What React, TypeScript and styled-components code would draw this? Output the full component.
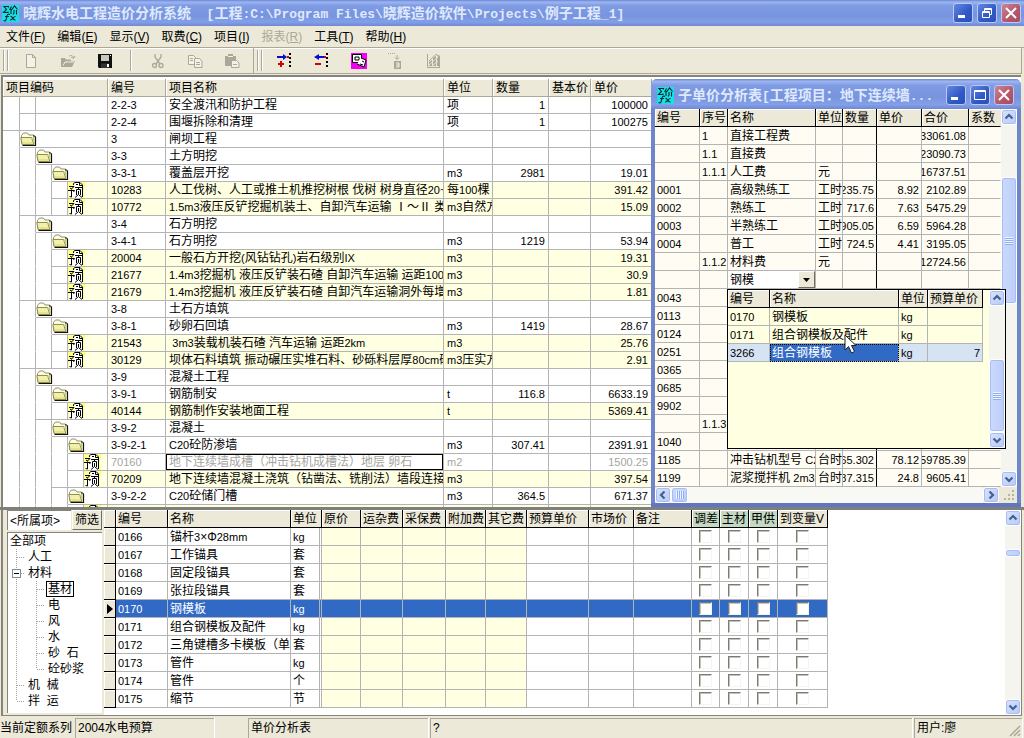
import React from 'react';
import styled, { createGlobalStyle, css } from 'styled-components';

const face = '#ece9d8';
const line = '#b4b4b4';
const pale = '#ffffe1';
const cream = '#fffdf3';
const select = '#316ac5';

const GlobalStyle = createGlobalStyle`
  * { box-sizing: border-box; }
  html, body { margin: 0; height: 100%; }
  body {
    background: ${face};
    color: #000;
    font: 12px/14px "Liberation Sans", "Noto Sans CJK SC", sans-serif;
    overflow: hidden;
  }
  button, input { font: inherit; color: inherit; margin: 0; padding: 0; border: 0; border-radius: 0; }
`;

/* ---------- frame ---------- */

const Frame = styled.div`
  display: flex;
  flex-direction: column;
  height: 100vh;
  min-width: 900px;
`;

const TitleBar = styled.header<{ $tall?: boolean }>`
  display: flex;
  align-items: center;
  gap: 4px;
  height: ${p => (p.$tall ? 30 : 26)}px;
  padding: 0 3px 0 2px;
  overflow: hidden;
  background: linear-gradient(#6c87d8 0, #9db5f0 8%, #7e9be4 22%, #7894de 60%, #839fe8 85%, #7088d2 100%);
  ${p => p.$tall && css`
    padding: 2px 7px 0 6px;
    border-radius: 6px 6px 0 0;
  `}
`;

const Caption = styled.h1`
  flex: 1;
  min-width: 0;
  margin: 0;
  overflow: hidden;
  white-space: pre;
  color: #dfe9fd;
  font: bold 14px/20px "Noto Sans CJK SC", sans-serif;
`;

const Mono = styled.span`
  font-family: "Liberation Mono", monospace;
  font-size: 13px;
`;

const CaptionButtons = styled.div`
  display: flex;
  gap: 4px;
`;

const CaptionButton = styled.button<{ $close?: boolean }>`
  display: flex;
  align-items: center;
  justify-content: center;
  width: 20px;
  height: 20px;
  border: 1px solid #b9c9f4;
  border-radius: 3px;
  background: ${p => p.$close
    ? 'linear-gradient(135deg, #c98593, #b5566a 60%, #a84c62)'
    : 'linear-gradient(135deg, #6487e4, #3058c4 60%, #2c50bc)'};
`;

const MenuBar = styled.nav`
  display: flex;
  gap: 12px;
  height: 21px;
  padding: 3px 6px 0;
`;

const MenuItem = styled.button`
  height: 16px;
  background: none;
  line-height: 16px;
  white-space: nowrap;
  &:disabled { color: #aca899; }
`;

const ToolBars = styled.div`
  display: flex;
  height: 27px;
  padding-right: 2px;
  border-top: 1px solid #aca899;
`;

const ToolBar = styled.div<{ $grow?: boolean }>`
  display: flex;
  align-items: center;
  flex: ${p => (p.$grow ? 1 : 'none')};
  padding-left: 3px;
  border: solid #aca899;
  border-width: 0 1px 1px 0;
  box-shadow: inset 0 1px #fff;
`;

const Grip = styled.div`
  width: 5px;
  height: 21px;
  margin-right: 4px;
  border: solid #aca899;
  border-width: 0 1px;
  box-shadow: inset 1px 0 #fff, 1px 0 #fff;
`;

const ToolButton = styled.button`
  display: flex;
  align-items: center;
  justify-content: center;
  width: 37px;
  height: 23px;
  background: none;
`;

const ToolSeparator = styled.div`
  width: 2px;
  height: 21px;
  margin: 0 7px;
  border-left: 1px solid #aca899;
  border-right: 1px solid #fff;
`;

const Workspace = styled.main`
  position: relative;
  flex: 1;
  min-height: 0;
  padding: 1px 3px 0 1px;
`;

const UpperPane = styled.section`
  height: 100%;
  overflow: hidden;
  background: #fff;
  border: solid #85837a;
  border-width: 2px 0 0 2px;
  padding-top: 2px;
`;

/* ---------- tables ---------- */

const Sheet = styled.table<{ $row: number; $pad?: number }>`
  table-layout: fixed;
  width: 0;
  border-collapse: separate;
  border-spacing: 0;
  th, td {
    height: ${p => p.$row}px;
    padding: 0 ${p => p.$pad || 2}px;
    border: solid ${line};
    border-width: 0 1px 1px 0;
    overflow: hidden;
    white-space: pre;
    text-align: left;
    font-weight: normal;
    vertical-align: middle;
  }
`;

const HeadCell = styled.th<{ $black?: boolean; $green?: boolean; $last?: boolean }>`
  && {
    background: ${p => (p.$green ? '#c3d9c3' : face)};
    box-shadow: inset 1px 1px #fff;
    ${p => p.$black && css`border-color: #000;`}
    ${p => p.$last && css`border-right-color: ${face};`}
  }
`;

const TreeHead = styled(HeadCell)`
  && { height: 18px; border-color: #aca899; }
`;

const BodyRow = styled.tr<{ $bg?: string; $color?: string }>`
  background: ${p => p.$bg || 'transparent'};
  color: ${p => p.$color || 'inherit'};
`;

const Code = styled.td`
  font-size: 11px;
`;

const Latin = styled.span`
  font-size: 11px;
`;

const NumText = styled.div`
  display: flex;
  justify-content: flex-end;
  margin-left: -2px;
  overflow: hidden;
`;

const Num = ({ children }: { children?: React.ReactNode }) => (
  <Code><NumText>{children}</NumText></Code>
);

/* Latin letters and digits are set one size below the Han characters beside them. */
const Mixed = ({ text = '' }: { text?: string }) => (
  <>{text.split(/([\x21-\x7e]+)/).map((s, i) => (i % 2 ? <Latin key={i}>{s}</Latin> : s))}</>
);

const FocusCell = styled.td`
  && { box-shadow: inset 0 0 0 1px #000; }
`;

const TreeCell = styled.td`
  && { padding: 0; border-bottom: 0; background: #fff; }
`;

const TreeLine = styled.div`
  display: flex;
  height: 17px;
`;

const Gutter = styled.div<{ $under: boolean }>`
  flex: none;
  width: 17px;
  margin-right: -1px;
  border-right: 1px solid ${line};
  border-bottom: 1px solid ${p => (p.$under ? line : 'transparent')};
`;

const TreeRest = styled.div<{ $bg?: string }>`
  flex: 1;
  margin-left: 1px;
  border-bottom: 1px solid ${line};
  background: ${p => p.$bg || '#fff'};
  svg { display: block; }
`;

/* ---------- scroll bars ---------- */

const ScrollTrack = styled.div<{ $h?: boolean }>`
  display: flex;
  flex: none;
  flex-direction: ${p => (p.$h ? 'row' : 'column')};
  ${p => (p.$h ? 'height: 16px;' : 'width: 16px;')}
  background: #f5f5f0;
`;

const ScrollButton = styled.button`
  display: flex;
  flex: none;
  align-items: center;
  justify-content: center;
  width: 16px;
  height: 16px;
  border: 1px solid #fff;
  border-radius: 3px;
  background: linear-gradient(135deg, #d8e3fe, #b7c9f7);
  box-shadow: inset 0 0 0 1px #a9bdf0;
`;

const Thumb = styled.div<{ $size: number; $h?: boolean }>`
  display: flex;
  flex: none;
  align-items: center;
  justify-content: center;
  ${p => (p.$h ? `width: ${p.$size}px; height: 16px;` : `height: ${p.$size}px; width: 16px;`)}
  border: 1px solid #fff;
  border-radius: 3px;
  background: linear-gradient(${p => (p.$h ? '180deg' : '90deg')}, #cbdafe, #bccdf8);
  box-shadow: inset 0 0 0 1px #a9bdf0;
`;

const Ridges = styled.div<{ $h?: boolean }>`
  width: 8px;
  height: 8px;
  background: repeating-linear-gradient(${p => (p.$h ? '90deg' : '180deg')}, #eef4fe 0 1px, #8cb0f8 1px 2px);
`;

const Gap = styled.div<{ $px?: number }>`
  flex: ${p => (p.$px !== undefined ? `0 0 ${p.$px}px` : 1)};
`;

const Arrow = ({ d }: { d: string }) => (
  <svg width="10" height="10" viewBox="0 0 10 10" fill="none" stroke="#46608c" strokeWidth="2.2" aria-hidden="true">
    <path d={d} />
  </svg>
);
const up = 'M1.5 6.5 5 3l3.5 3.5';
const down = 'M1.5 3.5 5 7l3.5-3.5';
const left = 'M6.5 1.5 3 5l3.5 3.5';
const right = 'M3.5 1.5 7 5 3.5 8.5';

/* ---------- child window ---------- */

const ChildWindow = styled.section`
  position: absolute;
  top: 5px;
  right: 3px;
  width: 370px;
  border-radius: 6px 6px 0 0;
  background: #6e85cc;
`;

const WindowBody = styled.div`
  position: relative;
  margin: 0 4px;
  background: ${cream};
`;

const WindowFoot = styled.div`
  height: 4px;
  background: #6176bf;
`;

const Row = styled.div`
  display: flex;
`;

const PriceSheet = styled(Sheet)`
  background: ${cream};
  th:nth-child(5), td:nth-child(5) { border-right-color: #000; }
  td:last-child { border-right-color: ${cream}; }
`;

const EditCell = styled.td`
  && { padding: 0 0 0 2px; background: #fff; }
`;

const EditBox = styled.div`
  display: flex;
  height: 17px;
  input { flex: 1; min-width: 0; background: #fff; outline: 0; }
`;

const DropButton = styled.button`
  && {
    display: flex;
    align-items: center;
    justify-content: center;
    width: 17px;
    background: ${face};
    border: 1px solid;
    border-color: #fff #716f64 #716f64 #fff;
  }
`;

const HScroll = styled(ScrollTrack)`
  background: ${face};
`;

const HTrack = styled.div`
  display: flex;
  flex: 1;
  background: #f8f8f4;
`;

const Corner = styled.div`
  display: flex;
  align-items: flex-end;
  justify-content: flex-end;
  width: 18px;
  padding: 1px;
`;

const Lookup = styled.div`
  position: absolute;
  top: 180px;
  left: 72px;
  display: flex;
  width: 279px;
  height: 160px;
  border: 1px solid #000;
  background: ${pale};
`;

const LookupBody = styled.div`
  flex: 1;
  min-width: 0;
`;

const Picked = styled.td`
  && {
    background: ${select};
    color: #fff;
    outline: 1px dotted #000;
    outline-offset: -1px;
  }
`;

const Pointer = styled.svg`
  position: absolute;
  top: 225px;
  left: 189px;
`;

/* ---------- lower pane ---------- */

const Splitter = styled.div`
  height: 3px;
  background: #7f7f7b;
`;

const LowerPane = styled.section`
  display: flex;
  margin: 0 2px 0 1px;
  padding-left: 4px;
  border: solid #85837a;
  border-width: 0 1px 1px 2px;
`;

const Filter = styled.aside`
  display: flex;
  flex-direction: column;
  width: 95px;
  margin-right: 2px;
  padding-bottom: 2px;
`;

const FilterTop = styled.div`
  display: flex;
  height: 20px;
  margin-bottom: 2px;
`;

const FilterField = styled.input`
  && {
    flex: 1;
    min-width: 0;
    padding-left: 2px;
    background: #fff;
    border: solid #85837a;
    border-width: 1px 0 0 1px;
  }
`;

const FilterButton = styled.button`
  && {
    width: 30px;
    margin-left: 1px;
    background: ${face};
    border: 1px solid;
    border-color: #fff #716f64 #716f64 #fff;
  }
`;

const TreeBox = styled.ul`
  flex: 1;
  margin: 0;
  padding: 0 0 0 1px;
  list-style: none;
  background: #fff;
  border: solid #85837a;
  border-width: 1px 0 0 1px;
`;

const TreeItem = styled.li`
  display: flex;
  align-items: center;
  height: 16px;
  white-space: pre;
`;

const ItemLabel = styled.span<{ $boxed?: boolean }>`
  padding: 0 1px;
  ${p => p.$boxed && css`outline: 1px solid #000;`}
`;

const Materials = styled.div`
  flex: 1;
  display: flex;
  min-width: 0;
  background: #fff;
`;

const SheetArea = styled.div`
  flex: 1;
  min-width: 0;
  min-height: 205px;
  overflow: hidden;
`;

const Indicator = styled.td`
  && {
    padding: 0;
    background: ${face};
    border-color: #000;
    box-shadow: inset 1px 1px #fff;
  }
  svg { display: block; margin: 0 auto; }
`;

const UnitCell = styled.td`
  && { border-right: 3px double ${line}; }
`;

const PriceCell = styled.td<{ $on?: boolean }>`
  background: ${p => (p.$on ? 'transparent' : pale)};
`;

const CheckCell = styled.td`
  && { padding: 0; }
`;

const Check = styled.input<{ $on?: boolean }>`
  && {
    appearance: none;
    display: block;
    width: 13px;
    height: 13px;
    margin: 0 auto;
    background: #fff;
    border: 1px solid;
    border-color: #7d7b73 #f4f4f0 #f4f4f0 #7d7b73;
    box-shadow: inset 1px 1px #c4c2b8;
  }
`;

const StatusBar = styled.footer`
  display: flex;
  height: 22px;
  padding-top: 2px;
  overflow: hidden;
`;

const StatusLabel = styled.div`
  width: 72px;
  margin-right: 3px;
  padding-top: 3px;
  white-space: nowrap;
`;

const StatusPanel = styled.div<{ $w?: number }>`
  display: flex;
  justify-content: space-between;
  flex: ${p => (p.$w ? `0 0 ${p.$w}px` : 1)};
  padding: 2px 1px 0 2px;
  border: solid #aca899;
  border-width: 1px 0 0 1px;
  box-shadow: 1px 0 #fff;
  margin-right: 2px;
  white-space: nowrap;
`;

const StatusSpace = styled.div`
  width: 32px;
`;

/* ---------- drawings ---------- */

const AppIcon = () => (
  <svg width="17" height="17" viewBox="0 0 17 17" aria-hidden="true">
    <rect width="17" height="17" fill="#19dfe6" />
    <g stroke="#06292f" strokeWidth="1.1" fill="none">
      <path d="M6.500 2.500v-1H2l2.500 3-3 3h4.500v-1" />
      <path d="M9.500 1.500 7.500 5M9 4v5M9.500 5l3-4 3 3.500M12 5v3l-1 1.500M14.500 5v4.500" />
      <path d="M8 9.500c-2-1-3 0-3 2L4 15c-.5 1-1.500 1-2.500.5M3 11.500h4M8.500 11.500c2-1 2 4 5 3.500M13.500 11.500c-2-.5-3 4-5.500 3.500" />
    </g>
  </svg>
);

const Folder = () => (
  <svg width="17" height="16" viewBox="0 0 17 16" aria-hidden="true">
    <path d="M1.500 12.500v-8l2-2.500h4L9 4h4.500v3" fill="#fffee0" stroke="#8f8f70" />
    <path d="M2 13.500 .8 6.500h10.700l2.500 7z" fill="#e6e58c" stroke="#8f8e50" />
    <path d="M2 8h9.500M2.500 10h9.500" stroke="#fcfcd0" />
    <path d="M13.500 4.500 15.500 6v8.500H2.500" fill="none" stroke="#111" strokeWidth="1.200" />
    <path d="m12 7 2.500-2v8z" fill="#c9c97a" />
  </svg>
);

const Quota = () => (
  <svg width="17" height="16" viewBox="0 0 17 16" aria-hidden="true">
    <path d="M0 0h17v4H0z" fill="#ffff50" />
    <path d="M0 0h16v16H0z" fill="#ffff8c" />
    <path d="M6 16V1h6l3 3v12z" fill="#fff" />
    <path d="M1 8h5v8H1z" fill="#fff" />
    <g fill="none" stroke="#000">
      <path d="M5.500 3V1.500L7 .5h5l2.500 2.500v12M11.500 1v2.500h3M8 2.500h2" />
      <path d="M1 4.500h5L3.500 7M2 6l2 1.500M0 8.500h6.500L5.500 10M3.500 8.500v6.500l-2-.5" />
      <path d="M7 5.500h7M10.500 5.500v2M8.500 13V7.500h4V13M10.500 9v3.500L7 15.500M11 13l3 2.500" />
    </g>
  </svg>
);

const Marker = () => (
  <svg width="6" height="10" viewBox="0 0 6 10" aria-hidden="true"><path d="M0 0v10l6-5z" /></svg>
);

const SizeGrip = () => (
  <svg width="13" height="16" viewBox="0 0 13 16" stroke="#aca899" strokeWidth="1.500" aria-hidden="true">
    <path d="M12 5 2 15M12 9l-6 6M12 13l-2 2" />
  </svg>
);

const Dots = () => (
  <svg width="12" height="12" viewBox="0 0 12 12" fill="#b8b4a2" aria-hidden="true">
    <path d="M8 0h2v2H8zM4 4h2v2H4zM8 4h2v2H8zM0 8h2v2H0zM4 8h2v2H4zM8 8h2v2H8z" />
  </svg>
);

const MinGlyph = () => <svg width="12" height="12" aria-hidden="true"><path d="M1 8h7v3H1z" fill="#fff" /></svg>;
const MaxGlyph = () => (
  <svg width="12" height="12" fill="none" stroke="#fff" aria-hidden="true"><path d="M.5 1.500h11v9H.5zM.5 2.500h11" /></svg>
);
const RestoreGlyph = () => (
  <svg width="12" height="12" fill="none" stroke="#fff" aria-hidden="true">
    <path d="M3.500 4V1.500h7v6H9M3.500 2.500h7M1.500 4.500h7v6h-7zM1.500 5.500h7" />
  </svg>
);
const CloseGlyph = () => (
  <svg width="12" height="12" stroke="#fff" strokeWidth="2" aria-hidden="true"><path d="m1 1 10 10M11 1 1 11" /></svg>
);

const gray = '#aca899';
const paper = '#f4f2e6';
const tools: Record<string, React.ReactNode> = {
  new: <path d="M3.500 1.500h6l3 3v10h-9zM9.500 1.500v3h3" fill={paper} stroke={gray} />,
  open: <><path d="M1 14V5h4l1 1.500h5V8h4l-3 6z" fill={gray} /><path d="M3 12.500 5 9h9" stroke={paper} fill="none" /><path d="M9 3.500c2-2 4-1 4.500 1.500M15 3l-1.500 2.500L11 4" fill="none" stroke={gray} /></>,
  save: <><path d="M1 1h14v14H2l-1-1z" fill="#111" /><path d="M4 2h8v6H4z" fill="#c9c9bd" /><path d="M4 10.500h8V15H4z" fill="#333" /><path d="M10 11h2v3h-2zM13 2h1v1h-1z" fill="#fff" /></>,
  cut: <g fill="none" stroke={gray} strokeWidth="1.300"><path d="M5 1v3l5 7M11 1v3l-5 7" /><circle cx="4.500" cy="12.500" r="2" /><circle cx="11" cy="12.500" r="2" /></g>,
  copy: <g fill={paper} stroke={gray}><path d="M1.500 2.500h5l2 2v7h-7z" /><path d="M7.500 5.500h5l2.500 2.500v6.500H7.500z" /><path d="M3 5.500h3M3 7.500h3M9 9.500h4M9 11.500h4" /></g>,
  paste: <><path d="M1 3h3V1h5v2h3v10H1z" fill={gray} /><path d="M4 3.500h5" stroke={paper} /><path d="M7.500 7.500h5l2.500 2.500v4.500H7.500z" fill={paper} stroke={gray} /><path d="M9 11.500h4" stroke={gray} /></>,
  add: <><path d="M0 3h6V1l4 3-4 3V5H0z" fill="#0a0ad0" /><path d="M1 11h6M4 8v6" stroke="#d40000" strokeWidth="2" /><path d="M13 0v15" stroke="#000" strokeWidth="2" strokeDasharray="2 2" /><path d="M10 3h2v2h-2z" fill="#d40000" /></>,
  remove: <><path d="M10 3H5V1L0 4l5 3V5h5z" fill="#0a0ad0" /><path d="M1 11h6" stroke="#d40000" strokeWidth="2" /><path d="M13 0v15" stroke="#000" strokeWidth="2" strokeDasharray="2 2" /><path d="M10 3h2v2h-2z" fill="#d40000" /></>,
  report: <><path d="M0 0h16v16H0z" fill="#f400f4" /><path d="M1.500 1.500h9v8h-9z" fill="#fff" stroke="#000" /><path d="M4 4h4v3H4z" fill="none" stroke="#000" /><path d="m10 5 5 2-2 7-7-3" fill="#fff" stroke="#000" /><path d="m11 8 2 1M9 11l3 1" stroke="#000" /></>,
  price: <><path d="M0 .5h8" stroke={gray} strokeDasharray="1 1" /><path d="M9 2v4M7 4.500l2 2 2-2" fill="none" stroke={gray} /><path d="M6 8h7v8H6z" fill={gray} /><path d="M8 10h3v4H8M8 12h3" fill="none" stroke={paper} /></>,
  chart: <><path d="M2.500 1v13.500H15M14.500 14V3L11 1.500 4 8" fill="none" stroke={gray} /><path d="M4 13V9l3-2v6zM8 13V5l3-2v10zM12 13V4l2-1v10z" fill={gray} /><path d="m4 12 9-8M7 13l6-5" stroke="#e8e5d4" /></>,
};

const Tool = ({ name, label, disabled }: { name: string; label: string; disabled?: boolean }) => (
  <ToolButton aria-label={label} disabled={disabled}>
    <svg width="16" height="16" viewBox="0 0 16 16" aria-hidden="true">{tools[name]}</svg>
  </ToolButton>
);

/* ---------- data ---------- */

type TreeRow = [level: number, kind: string, code: string, name: string, unit?: string, qty?: string, price?: string];

const project: TreeRow[] = [
  [2, '', '2-2-3', '安全渡汛和防护工程', '项', '1', '100000'],
  [2, '', '2-2-4', '围堰拆除和清理', '项', '1', '100275'],
  [1, 'f', '3', '闸坝工程'],
  [2, 'f', '3-3', '土方明挖'],
  [3, 'f', '3-3-1', '覆盖层开挖', 'm3', '2981', '19.01'],
  [4, 'q', '10283', '人工伐树、人工或推土机推挖树根 伐树 树身直径20~', '每100棵', '', '391.42'],
  [4, 'q', '10772', '1.5m3液压反铲挖掘机装土、自卸汽车运输 Ⅰ～Ⅱ 类', 'm3自然方', '', '15.09'],
  [2, 'f', '3-4', '石方明挖'],
  [3, 'f', '3-4-1', '石方明挖', 'm3', '1219', '53.94'],
  [4, 'q', '20004', '一般石方开挖(风钻钻孔)岩石级别IX', 'm3', '', '19.31'],
  [4, 'q', '21677', '1.4m3挖掘机 液压反铲装石碴 自卸汽车运输 运距100', 'm3', '', '30.9'],
  [4, 'q', '21679', '1.4m3挖掘机 液压反铲装石碴 自卸汽车运输洞外每增', 'm3', '', '1.81'],
  [2, 'f', '3-8', '土石方填筑'],
  [3, 'f', '3-8-1', '砂卵石回填', 'm3', '1419', '28.67'],
  [4, 'q', '21543', ' 3m3装载机装石碴 汽车运输 运距2km', 'm3', '', '25.76'],
  [4, 'q', '30129', '坝体石料填筑 振动碾压实堆石料、砂砾料层厚80cm砾', 'm3压实方', '', '2.91'],
  [2, 'f', '3-9', '混凝土工程'],
  [3, 'f', '3-9-1', '钢筋制安', 't', '116.8', '6633.19'],
  [4, 'q', '40144', '钢筋制作安装地面工程', 't', '', '5369.41'],
  [3, 'f', '3-9-2', '混凝土'],
  [4, 'f', '3-9-2-1', 'C20砼防渗墙', 'm3', '307.41', '2391.91'],
  [5, 'q', '70160', '地下连续墙成槽（冲击钻机成槽法）地层 卵石', 'm2', '', '1500.25'],
  [5, 'q', '70209', '地下连续墙混凝土浇筑（钻凿法、铣削法）墙段连接', 'm3', '', '397.54'],
  [4, 'f', '3-9-2-2', 'C20砼储门槽', 'm3', '364.5', '671.37'],
  [5, 'q', '', ''],
];

const analysis: string[][] = [
  ['', '1', '直接工程费', '', '', '', '33061.08'],
  ['', '1.1', '直接费', '', '', '', '23090.73'],
  ['', '1.1.1', '人工费', '元', '', '', '16737.51'],
  ['0001', '', '高级熟练工', '工时', '235.75', '8.92', '2102.89'],
  ['0002', '', '熟练工', '工时', '717.6', '7.63', '5475.29'],
  ['0003', '', '半熟练工', '工时', '905.05', '6.59', '5964.28'],
  ['0004', '', '普工', '工时', '724.5', '4.41', '3195.05'],
  ['', '1.1.2', '材料费', '元', '', '', '12724.56'],
  ['', '', 'edit', '', '', '', ''],
  ['0043', '', '', '', '', '', ''],
  ['0113', '', '', '', '', '', ''],
  ['0124', '', '', '', '', '', ''],
  ['0251', '', '', '', '', '', ''],
  ['0365', '', '', '', '', '', ''],
  ['0685', '', '', '', '', '', ''],
  ['9902', '', '', '', '', '', ''],
  ['', '1.1.3', '', '', '', '', ''],
  ['1040', '', '', '', '', '', ''],
  ['1185', '', '冲击钻机型号 C2', '台时', '65.302', '78.12', '59785.39'],
  ['1199', '', '泥浆搅拌机 2m3', '台时', '87.315', '24.8', '9605.41'],
];

const materials = [
  ['0166', '锚杆3×Φ28mm', 'kg'],
  ['0167', '工作锚具', '套'],
  ['0168', '固定段锚具', '套'],
  ['0169', '张拉段锚具', '套'],
  ['0170', '钢模板', 'kg'],
  ['0171', '组合钢模板及配件', 'kg'],
  ['0172', '三角键槽多卡模板（单', '套'],
  ['0173', '管件', 'kg'],
  ['0174', '管件', '个'],
  ['0175', '缩节', '节'],
];

const menus = [['文件', 'F'], ['编辑', 'E'], ['显示', 'V'], ['取费', 'C'], ['项目', 'I'], ['报表', 'R'], ['工具', 'T'], ['帮助', 'H']];

const Cols = ({ widths }: { widths: number[] }) => (
  <colgroup>{widths.map((w, i) => <col key={i} width={w} />)}</colgroup>
);

/* ---------- parts ---------- */

const ProjectTable = () => (
  <Sheet $row={17} $pad={3}>
    <Cols widths={[105, 58, 278, 49, 56, 42, 61]} />
    <thead>
      <tr>{['项目编码', '编号', '项目名称', '单位', '数量', '基本价', '单价'].map(h => <TreeHead key={h}>{h}</TreeHead>)}</tr>
    </thead>
    <tbody>
      {project.map(([level, kind, code, name, unit, qty, price], i) => {
        const next = project[i + 1] ? project[i + 1][0] : level;
        const current = code === '70160';
        const bg = kind === 'q' && !current ? pale : '#fff';
        return (
          <BodyRow key={i} $bg={bg} $color={current ? '#a5a5a0' : undefined}>
            <TreeCell>
              <TreeLine>
                {Array.from({ length: level }, (_, g) => <Gutter key={g} $under={g >= next - 1} />)}
                <TreeRest $bg={kind === 'q' ? pale : undefined}>
                  {kind === 'f' && <Folder />}
                  {kind === 'q' && <Quota />}
                </TreeRest>
              </TreeLine>
            </TreeCell>
            <Code>{code}</Code>
            {current ? <FocusCell>{name}</FocusCell> : <td><Mixed text={name} /></td>}
            <td><Mixed text={unit} /></td>
            <Num>{qty}</Num>
            <td />
            <Num>{price}</Num>
          </BodyRow>
        );
      })}
    </tbody>
  </Sheet>
);

const TreeGuide = ({ depth, end, box }: { depth: number; end?: boolean; box?: boolean }) => (
  <svg width={depth === 1 ? 18 : 38} height="16" fill="none" stroke="#a0a0a0" strokeDasharray="1 1" aria-hidden="true">
    <path d={depth === 1 ? `M7.500 0v${end ? 8 : 16}M8 8.500h8` : `M7.500 0v16M27.500 0v${end ? 8 : 16}M28 8.500h8`} />
    {box && <><rect x="3.500" y="4.500" width="8" height="8" fill="#fff" stroke="#7d8b9b" strokeDasharray="none" /><path d="M5 8.500h5" stroke="#000" strokeDasharray="none" /></>}
  </svg>
);

const CategoryTree = () => (
  <TreeBox>
    <TreeItem><ItemLabel>全部项</ItemLabel></TreeItem>
    <TreeItem><TreeGuide depth={1} /><ItemLabel>人工</ItemLabel></TreeItem>
    <TreeItem><TreeGuide depth={1} box /><ItemLabel>材料</ItemLabel></TreeItem>
    {['基材', '电', '风', '水', '砂  石', '砼砂浆'].map((t, i) => (
      <TreeItem key={t}><TreeGuide depth={2} end={i === 5} /><ItemLabel $boxed={i === 0}>{t}</ItemLabel></TreeItem>
    ))}
    <TreeItem><TreeGuide depth={1} /><ItemLabel>机  械</ItemLabel></TreeItem>
    <TreeItem><TreeGuide depth={1} end /><ItemLabel>拌  运</ItemLabel></TreeItem>
  </TreeBox>
);

const checks = ['调差', '主材', '甲供', '到变量V'];

const MaterialTable = () => (
  <Sheet $row={18}>
    <Cols widths={[12, 52, 123, 31, 39, 42, 43, 40, 41, 62, 45, 58, 28, 29, 29, 50]} />
    <thead>
      <tr>
        {['', '编号', '名称', '单位', '原价', '运杂费', '采保费', '附加费', '其它费', '预算单价', '市场价', '备注', ...checks].map((h, i) => (
          <HeadCell key={i} $black $green={i > 11 && i < 15}>{h}</HeadCell>
        ))}
      </tr>
    </thead>
    <tbody>
      {materials.map(([code, name, unit]) => {
        const on = code === '0170';
        return (
          <BodyRow key={code} $bg={on ? select : '#fff'} $color={on ? '#fff' : undefined}>
            <Indicator>{on && <Marker />}</Indicator>
            <Code>{code}</Code>
            <td><Mixed text={name} /></td>
            <UnitCell><Mixed text={unit} /></UnitCell>
            {[0, 1, 2, 3, 4].map(c => <PriceCell key={c} $on={on} />)}
            <td /><td /><td />
            {checks.map(c => <CheckCell key={c}><Check type="checkbox" aria-label={`${code} ${c}`} /></CheckCell>)}
          </BodyRow>
        );
      })}
    </tbody>
  </Sheet>
);

const LookupList = () => (
  <Lookup>
    <LookupBody>
      <Sheet $row={18}>
        <Cols widths={[42, 129, 29, 55]} />
        <thead>
          <tr>{['编号', '名称', '单位', '预算单价'].map(h => <HeadCell key={h} $black>{h}</HeadCell>)}</tr>
        </thead>
        <tbody>
          <tr><Code>0170</Code><td>钢模板</td><Code>kg</Code><Num /></tr>
          <tr><Code>0171</Code><td>组合钢模板及配件</td><Code>kg</Code><Num /></tr>
          <BodyRow $bg="#d6e3f3"><Code>3266</Code><Picked>组合钢模板</Picked><Code>kg</Code><Num>7</Num></BodyRow>
        </tbody>
      </Sheet>
    </LookupBody>
    <ScrollTrack>
      <ScrollButton aria-label="向上"><Arrow d={up} /></ScrollButton>
      <Gap />
      <Thumb $size={73}><Ridges /></Thumb>
      <ScrollButton aria-label="向下"><Arrow d={down} /></ScrollButton>
    </ScrollTrack>
  </Lookup>
);

const AnalysisWindow = () => (
  <ChildWindow>
    <TitleBar $tall>
      <AppIcon />
      <Caption as="h2">子单价分析表<Mono>[</Mono>工程项目：地下连续墙<Mono>...</Mono></Caption>
      <CaptionButtons>
        <CaptionButton aria-label="最小化"><MinGlyph /></CaptionButton>
        <CaptionButton aria-label="最大化"><MaxGlyph /></CaptionButton>
        <CaptionButton $close aria-label="关闭"><CloseGlyph /></CaptionButton>
      </CaptionButtons>
    </TitleBar>
    <WindowBody>
      <Row>
        <PriceSheet $row={18}>
          <Cols widths={[45, 28, 88, 27, 34, 45, 47, 32]} />
          <thead>
            <tr>
              {['编号', '序号', '名称', '单位', '数量', '单价', '合价', '系数'].map((h, i) => (
                <HeadCell key={h} $black $last={i === 7}>{h}</HeadCell>
              ))}
            </tr>
          </thead>
          <tbody>
            {analysis.map(([code, no, name, unit, qty, price, total], i) => (
              <tr key={i}>
                <Code>{code}</Code>
                <Code>{no}</Code>
                {name === 'edit' ? (
                  <EditCell>
                    <EditBox>
                      <input aria-label="名称" defaultValue="钢模" />
                      <DropButton aria-label="展开列表">
                        <svg width="7" height="4" aria-hidden="true"><path d="M0 0h7L3.500 4z" /></svg>
                      </DropButton>
                    </EditBox>
                  </EditCell>
                ) : <td><Mixed text={name} /></td>}
                <td>{unit}</td>
                <Num>{qty}</Num>
                <Num>{price}</Num>
                <Num>{total}</Num>
                <td />
              </tr>
            ))}
          </tbody>
        </PriceSheet>
        <ScrollTrack>
          <ScrollButton aria-label="向上"><Arrow d={up} /></ScrollButton>
          <Gap $px={52} />
          <Thumb $size={127}><Ridges /></Thumb>
          <Gap />
          <ScrollButton aria-label="向下"><Arrow d={down} /></ScrollButton>
        </ScrollTrack>
      </Row>
      <HScroll $h>
        <ScrollButton aria-label="向左"><Arrow d={left} /></ScrollButton>
        <HTrack><Thumb $h $size={17}><Ridges $h /></Thumb></HTrack>
        <ScrollButton aria-label="向右"><Arrow d={right} /></ScrollButton>
        <Corner><Dots /></Corner>
      </HScroll>
      <LookupList />
      <Pointer width="14" height="21" viewBox="0 0 14 21" aria-hidden="true">
        <path d="M1 1v15l3.500-3.500L7.500 19l3-1.500L7.500 11.500H12z" fill="#fff" stroke="#222" />
      </Pointer>
    </WindowBody>
    <WindowFoot />
  </ChildWindow>
);

export default function App() {
  return (
    <Frame>
      <GlobalStyle />
      <TitleBar>
        <AppIcon />
        <Caption>
          晓辉水电工程造价分析系统<Mono>{'  ['}</Mono>工程<Mono>{':C:\\Program Files\\'}</Mono>晓辉造价软件<Mono>{'\\Projects\\'}</Mono>例子工程<Mono>_1]</Mono>
        </Caption>
        <CaptionButtons>
          <CaptionButton aria-label="最小化"><MinGlyph /></CaptionButton>
          <CaptionButton aria-label="还原"><RestoreGlyph /></CaptionButton>
          <CaptionButton $close aria-label="关闭"><CloseGlyph /></CaptionButton>
        </CaptionButtons>
      </TitleBar>
      <MenuBar>
        {menus.map(([t, k]) => <MenuItem key={k} disabled={k === 'R'}>{t}(<u>{k}</u>)</MenuItem>)}
      </MenuBar>
      <ToolBars>
        <ToolBar>
          <Grip />
          <Tool name="new" label="新建" disabled />
          <Tool name="open" label="打开" disabled />
          <Tool name="save" label="保存" />
          <ToolSeparator />
          <Tool name="cut" label="剪切" disabled />
          <Tool name="copy" label="复制" disabled />
          <Tool name="paste" label="粘贴" disabled />
          <Gap $px={3} />
        </ToolBar>
        <ToolBar $grow>
          <Grip />
          <Tool name="add" label="插入" />
          <Tool name="remove" label="删除" />
          <Tool name="report" label="报表" />
          <Tool name="price" label="单价" disabled />
          <Tool name="chart" label="图表" disabled />
        </ToolBar>
      </ToolBars>
      <Workspace>
        <UpperPane><ProjectTable /></UpperPane>
        <AnalysisWindow />
      </Workspace>
      <Splitter />
      <LowerPane>
        <Filter>
          <FilterTop>
            <FilterField aria-label="所属项" defaultValue="<所属项>" />
            <FilterButton>筛选</FilterButton>
          </FilterTop>
          <CategoryTree />
        </Filter>
        <Materials>
          <SheetArea><MaterialTable /></SheetArea>
          <ScrollTrack>
            <ScrollButton aria-label="向上"><Arrow d={up} /></ScrollButton>
            <Gap $px={23} />
            <Thumb $size={8} />
            <Gap />
            <ScrollButton aria-label="向下"><Arrow d={down} /></ScrollButton>
          </ScrollTrack>
        </Materials>
      </LowerPane>
      <StatusBar>
        <StatusLabel>当前定额系列</StatusLabel>
        <StatusPanel $w={139}>2004水电预算</StatusPanel>
        <StatusSpace />
        <StatusPanel $w={180}>单价分析表</StatusPanel>
        <StatusPanel>?</StatusPanel>
        <StatusPanel $w={108}>用户:廖 <SizeGrip /></StatusPanel>
      </StatusBar>
    </Frame>
  );
}
